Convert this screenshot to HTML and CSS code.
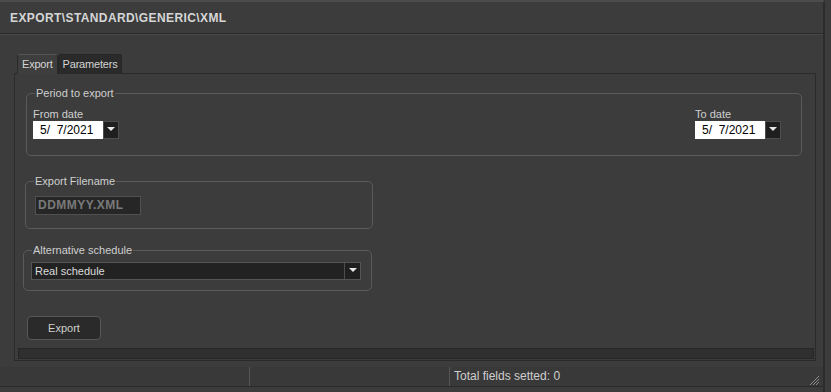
FILE: index.html
```html
<!DOCTYPE html>
<html lang="en">
<head>
  <meta charset="UTF-8" />
  <title>Export</title>
  <link rel="stylesheet" href="styles.css">
</head>
<body>
  <div class="window">
    <div class="titlebar">EXPORT\STANDARD\GENERIC\XML</div>

    <div class="content">
      <div class="tabs">
        <div class="tab active">Export</div>
        <div class="tab">Parameters</div>
      </div>

      <div class="panel">
        <fieldset class="group period">
          <legend>Period to export</legend>
          <div class="dates">
            <div class="date-field">
              <label>From date</label>
              <div class="datebox">
                <span class="date-text">5/&nbsp; 7/2021</span>
                <span class="drop"><i class="arrow"></i></span>
              </div>
            </div>
            <div class="date-field">
              <label>To date</label>
              <div class="datebox">
                <span class="date-text">5/&nbsp; 7/2021</span>
                <span class="drop"><i class="arrow"></i></span>
              </div>
            </div>
          </div>
        </fieldset>

        <fieldset class="group filename">
          <legend>Export Filename</legend>
          <div class="fname">DDMMYY.XML</div>
        </fieldset>

        <fieldset class="group schedule">
          <legend>Alternative schedule</legend>
          <div class="select">
            <span class="select-text">Real schedule</span>
            <span class="drop"><i class="arrow"></i></span>
          </div>
        </fieldset>

        <button class="btn">Export</button>

        <div class="progress"></div>
      </div>
    </div>

    <div class="statusbar">
      <div class="cell first"></div>
      <div class="cell second"></div>
      <div class="cell status-text">Total fields setted: 0</div>
      <div class="grip">
        <svg width="11" height="11" viewBox="0 0 11 11">
          <path d="M10 1 L1 10 M10 4 L4 10 M10 7 L7 10" stroke="#8a8a8a" stroke-width="1"/>
        </svg>
      </div>
    </div>
  </div>
</body>
</html>
```

FILE: styles.css
```css
html, body {
  margin: 0;
  padding: 0;
  background: #3c3c3c;
}
body {
  font-family: "Liberation Sans", Arial, sans-serif;
  font-size: 11px;
  color: #cfcfcf;
}
.window {
  width: 825px;
  height: 392px;
  border-right: 2px solid #2c2c2c;
  border-top: 2px solid #4c4c4c;
  box-sizing: border-box;
  overflow: hidden;
}
.titlebar {
  height: 31px;
  display: flex;
  align-items: center;
  padding-left: 10px;
  font-size: 12px;
  font-weight: bold;
  letter-spacing: 0.4px;
  color: #d6d6d6;
  border-bottom: 1px solid #2a2a2a;
  box-shadow: 0 1px 0 #484848;
}
.content {
  padding: 20px 7px 0 14px;
}
.tabs {
  display: flex;
  margin-left: 3px;
  align-items: flex-end;
}
.tab {
  height: 18px;
  line-height: 18px;
  padding: 0 4px;
  background: #2a2a2a;
  color: #d4d4d4;
  border: 1px solid #262626;
  border-bottom: none;
  border-radius: 3px 3px 0 0;
  letter-spacing: -0.2px;
}
.tab.active {
  height: 19px;
  background: #3e3e3e;
  border-color: #555 #2a2a2a transparent #2a2a2a;
  margin-bottom: -1px;
  position: relative;
}
.panel {
  height: 288px;
  border: 1px solid #2a2a2a;
  box-sizing: border-box;
  display: flex;
  flex-direction: column;
  align-items: flex-start;
}
.group {
  border: 1px solid #5a5a5a;
  border-radius: 5px;
  margin: 0;
  padding: 0 6px;
  box-sizing: border-box;
}
.group legend {
  padding: 0 1px;
  margin-left: 2px;
  line-height: 13px;
  color: #cfcfcf;
}
.period {
  width: 776px;
  height: 69px;
  margin: 13px 0 0 11px;
}
.dates {
  display: flex;
  justify-content: space-between;
  padding-right: 14px;
  margin-top: 7px;
}
.date-field label {
  display: block;
  line-height: 14px;
}
.datebox {
  display: flex;
  width: 86px;
  height: 18px;
}
.date-text {
  width: 70px;
  background: #fff;
  color: #000;
  font-size: 12px;
  line-height: 18px;
  padding-left: 7px;
  box-sizing: border-box;
}
.drop {
  width: 16px;
  background: #1f1f1f;
  border: 1px solid #4e4e4e;
  box-sizing: border-box;
  display: flex;
  justify-content: center;
  padding-top: 5px;
}
.arrow {
  width: 0;
  height: 0;
  border-left: 4px solid transparent;
  border-right: 4px solid transparent;
  border-top: 4px solid #e8e8e8;
}
.filename {
  width: 348px;
  height: 54px;
  margin: 19px 0 0 10px;
}
.fname {
  width: 106px;
  height: 19px;
  margin-top: 8px;
  margin-left: 3px;
  background: #262626;
  border: 1px solid #505050;
  box-sizing: border-box;
  color: #7a7a7a;
  font-weight: bold;
  font-size: 12px;
  letter-spacing: 0.5px;
  line-height: 17px;
  padding-left: 2px;
}
.schedule {
  width: 349px;
  height: 47px;
  margin: 15px 0 0 8px;
}
.select {
  display: flex;
  width: 330px;
  height: 18px;
  margin-left: 1px;
  margin-top: 5px;
  background: #222;
  border: 1px solid #555;
  box-sizing: border-box;
}
.select-text {
  flex: 1;
  font-size: 11px;
  line-height: 16px;
  padding-left: 3px;
  color: #dcdcdc;
}
.select .drop {
  border-width: 0 0 0 1px;
  padding-top: 5px;
}
.btn {
  margin: 25px 0 0 12px;
  width: 74px;
  height: 24px;
  background: #2a2a2a;
  border: 1px solid #575757;
  border-radius: 4px;
  color: #cfcfcf;
  font-family: "Liberation Sans", Arial, sans-serif;
  font-size: 11px;
  padding: 0;
}
.progress {
  margin: 8px 0 0 3px;
  width: 796px;
  height: 11px;
  background: #2f2f2f;
  border: 1px solid #272727;
  box-sizing: border-box;
}
.statusbar {
  margin-top: 6px;
  height: 19px;
  display: flex;
  align-items: center;
  background: #393939;
  border-bottom: 1px solid #2a2a2a;
  position: relative;
}
.cell {
  height: 19px;
  line-height: 19px;
  border-right: 1px solid #555;
  box-sizing: border-box;
}
.cell.first {
  width: 250px;
}
.cell.second {
  width: 200px;
}
.status-text {
  border-right: none;
  padding-left: 4px;
  font-size: 12px;
  flex: 1;
}
.grip {
  width: 14px;
  height: 19px;
  display: flex;
  align-items: flex-end;
}
```
